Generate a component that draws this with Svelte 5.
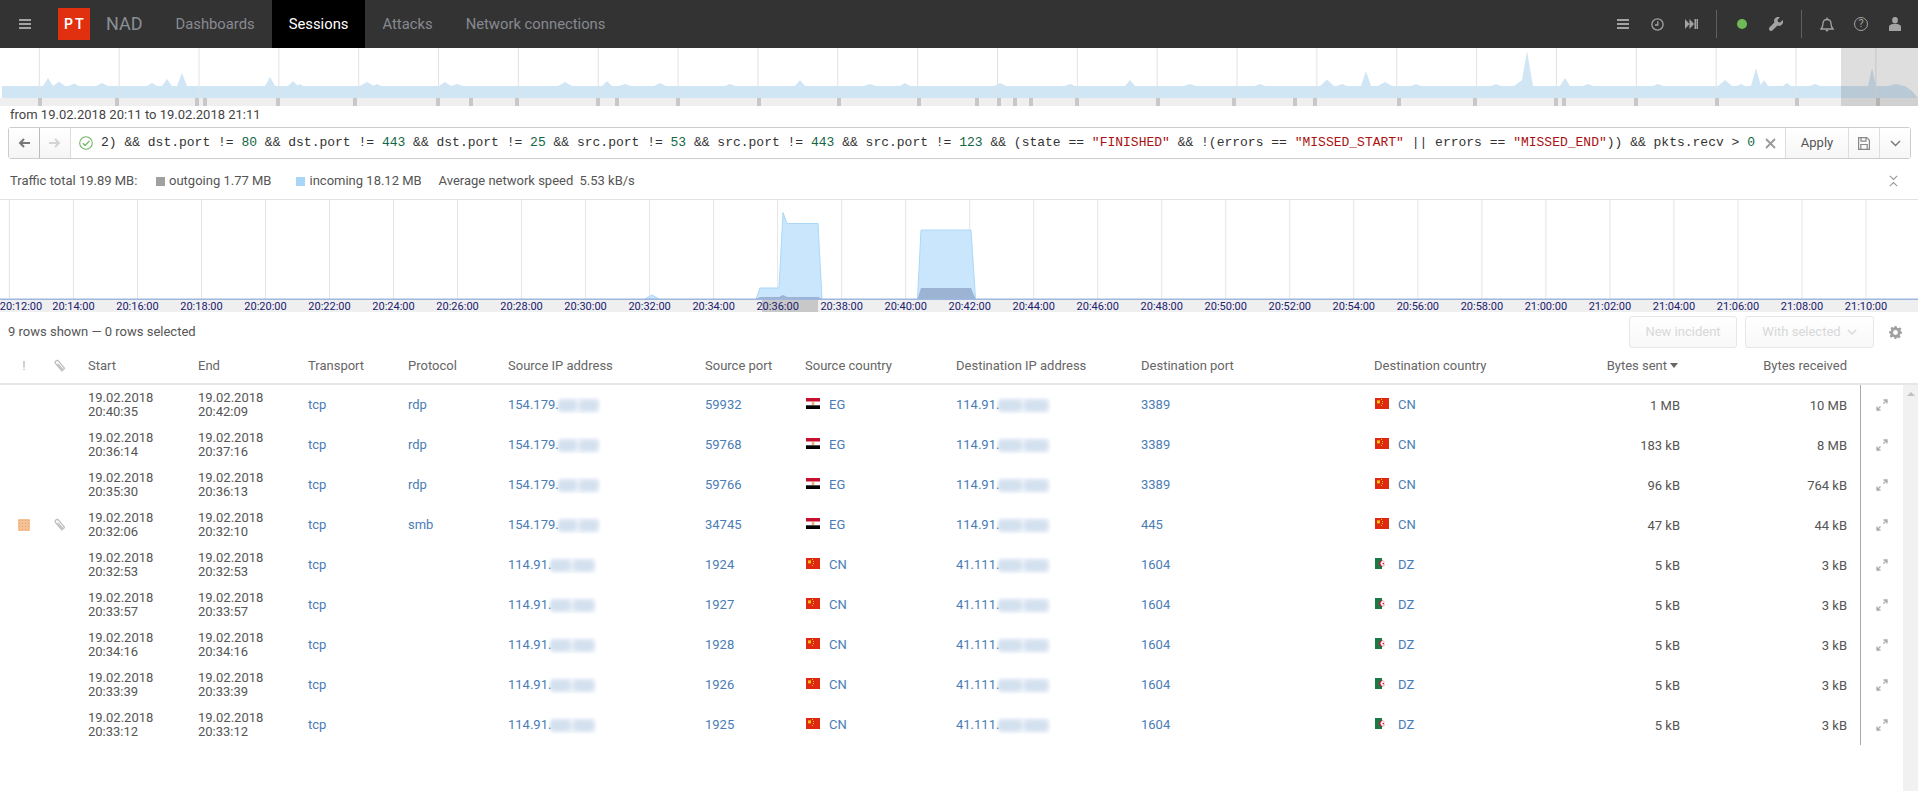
<script>
  const navItems = [
    { label: 'Dashboards', active: false },
    { label: 'Sessions', active: true },
    { label: 'Attacks', active: false },
    { label: 'Network connections', active: false }
  ];

  const bumps = [
    [48,78,5],[59,81.5,6],[74,83.5,5],[102,83,6],[152,83,5],[167,79,5],[182,73,5],[270,77,5],[293,81,5],[300,84,3],
    [367,82,7],[377,84,4],[445,82,6],[457,84,6],[565,82,7],[607,81,5],[625,84,6],
    [660,83,6],[730,84,5],[800,80,5],[870,84,6],[905,83,5],[1000,83,6],[1070,84,5],[1130,80,5],[1190,84,6],[1260,84,5],
    [1327,79.5,7],[1342,84,5],[1366,71,5],[1385,82,7],[1416,84,5],[1496,84,5],[1522,80,8],[1527,51,6],[1565,78,5],[1588,84,5],
    [1658,84,5],[1725,80,7],[1741,84,4],[1756,68,5],[1764,80,4],[1787,83,4],[1815,84,5],[1872,68,4],[1896,84,8]
  ];
  let miniPoints = [[2, 50], [2, 38]];
  for (const [x, y, w] of bumps) {
    miniPoints.push([x - w, 38], [x, y - 48], [x + w, 38]);
  }
  miniPoints.push([1905, 38], [1912, 43], [1918, 50]);
  const miniArea = miniPoints.map((p) => p.join(',')).join(' ') + ' 1918,50';

  const miniGrid = Array.from({ length: 24 }, (_, i) => 39.3 + 79.85 * i);
  const miniTicks = [38,115,195,203,276,353,436,469,515,596,615,676,757,837,917,975,997,1013,1029,1075,1156,1232,1293,1313,1397,1473,1554,1562,1634,1715,1795,1876];

  const times = Array.from({ length: 30 }, (_, i) => {
    const total = 20 * 60 + 12 + i * 2;
    const h = Math.floor(total / 60);
    const m = String(total % 60).padStart(2, '0');
    return { x: 9.4 + 64.02 * i, label: `${h}:${m}:00` };
  });

  const S1 = '154.179.', D1 = '114.91.', D2 = '41.111.';
  const rows = [
    ['20:40:35','20:42:09','rdp',S1,'59932','EG',D1,'3389','CN','1 MB','10 MB',false],
    ['20:36:14','20:37:16','rdp',S1,'59768','EG',D1,'3389','CN','183 kB','8 MB',false],
    ['20:35:30','20:36:13','rdp',S1,'59766','EG',D1,'3389','CN','96 kB','764 kB',false],
    ['20:32:06','20:32:10','smb',S1,'34745','EG',D1,'445','CN','47 kB','44 kB',true],
    ['20:32:53','20:32:53','',D1,'1924','CN',D2,'1604','DZ','5 kB','3 kB',false],
    ['20:33:57','20:33:57','',D1,'1927','CN',D2,'1604','DZ','5 kB','3 kB',false],
    ['20:34:16','20:34:16','',D1,'1928','CN',D2,'1604','DZ','5 kB','3 kB',false],
    ['20:33:39','20:33:39','',D1,'1926','CN',D2,'1604','DZ','5 kB','3 kB',false],
    ['20:33:12','20:33:12','',D1,'1925','CN',D2,'1604','DZ','5 kB','3 kB',false]
  ];
</script>

{#snippet clip()}
  <svg class="clip" width="12" height="14" viewBox="0 0 12 14" fill="none" stroke="#bdbdbd" stroke-width="1.3">
    <path d="M9.500 12.500 L2.600 4.600 A1.900 1.900 0 0 1 5.600 2.200 L11 8.600 A1.100 1.100 0 0 1 9.300 10 L4.600 4.600" />
  </svg>
{/snippet}

{#snippet flag(code)}
  <svg class="flag" width="14" height="11" viewBox="0 0 14 11">
    {#if code === 'EG'}
      <rect width="14" height="3.700" fill="#c8102e" />
      <rect y="3.700" width="14" height="3.600" fill="#fff" />
      <rect y="7.300" width="14" height="3.700" fill="#000" />
      <rect x="5.800" y="4" width="2.400" height="3" fill="#e8b06a" />
    {:else if code === 'CN'}
      <rect width="14" height="11" fill="#de2910" />
      <rect x="2" y="2.400" width="3" height="3" fill="#f5c518" />
      <rect x="6" y="1" width="1" height="1" fill="#f5c518" />
      <rect x="7" y="3" width="1" height="1" fill="#f5c518" />
      <rect x="7" y="5" width="1" height="1" fill="#f5c518" />
      <rect x="6" y="7" width="1" height="1" fill="#f5c518" />
    {:else}
      <rect width="7" height="11" fill="#1a7a45" />
      <rect x="7" width="7" height="11" fill="#fff" />
      <circle cx="7" cy="5.500" r="3" fill="#d21034" />
      <circle cx="7.900" cy="5.500" r="2.400" fill="#fff" />
      <rect x="7.600" y="4.800" width="1.600" height="1.500" fill="#d21034" />
    {/if}
  </svg>
{/snippet}

{#snippet masked(prefix, a, b)}
  <span class="ip"><span class="mask" aria-hidden="true"><i class="blob" style={`width:${a}px`}></i><i class="blob" style={`width:${b}px`}></i></span><span class="ip-text">{prefix}</span></span>
{/snippet}

<div class="page">
  <header class="topbar">
    <svg class="burger" width="12" height="10" viewBox="0 0 12 10" fill="#a3a3a3">
      <rect width="12" height="2" /><rect y="4" width="12" height="2" /><rect y="8" width="12" height="2" />
    </svg>
    <div class="logo">PT</div>
    <div class="brand">NAD</div>
    <nav class="nav">
      {#each navItems as item}
        <span class="tab" class:active={item.active}>{item.label}</span>
      {/each}
    </nav>
    <div class="tools">
      <span class="slot"><svg width="12" height="10" viewBox="0 0 12 10" fill="#a3a3a3"><rect width="12" height="2" /><rect y="4" width="12" height="2" /><rect y="8" width="12" height="2" /></svg></span>
      <span class="slot"><svg width="13" height="13" viewBox="0 0 13 13" fill="none" stroke="#a3a3a3" stroke-width="1.300"><circle cx="6.500" cy="6.500" r="5.600" /><path d="M6.800 3.200V7H4" /></svg></span>
      <span class="slot"><svg width="13" height="10" viewBox="0 0 13 10" fill="#a3a3a3"><path d="M0 0l4.500 5L0 10zM4.500 0L9 5l-4.500 5zM9.500 0H11v10H9.500z" /><rect x="11.500" width="1.500" height="10" /></svg></span>
      <span class="sep"></span>
      <span class="slot"><span class="dot"></span></span>
      <span class="slot"><svg width="14" height="14" viewBox="0 0 14 14" fill="#a3a3a3"><path d="M13.600 3.100L11.200 5.500 9 5 8.500 2.800 10.900.4A4 4 0 0 0 5.400 5.500L.6 10.300a2 2 0 0 0 3 3L8.500 8.600A4 4 0 0 0 13.600 3.100z" /></svg></span>
      <span class="sep"></span>
      <span class="slot"><svg width="14" height="15" viewBox="0 0 14 15" fill="none" stroke="#a3a3a3" stroke-width="1.300"><path d="M1 12h12c-1.500-1.500-2-3-2-5.500C11 4 9.300 2.500 7 2.500S3 4 3 6.500C3 9 2.500 10.500 1 12z" /><path d="M7 .5v2" /><path d="M5.800 13.500h2.400" stroke-width="1.600" /></svg></span>
      <span class="slot"><span class="help">?</span></span>
      <span class="slot"><svg width="12" height="14" viewBox="0 0 12 14" fill="#a3a3a3"><rect x="3.200" width="5.600" height="6.400" rx="2.600" /><path d="M0 14V9.500C0 8.300 1.500 7.600 3.500 7h5c2 .6 3.500 1.300 3.500 2.500V14z" /></svg></span>
    </div>
  </header>

  <svg class="mini" width="1918" height="58" viewBox="0 0 1918 58">
    <rect y="50" width="1918" height="8" fill="#efefef" />
    <polygon points={miniArea} fill="#d0e6f5" />
    {#each miniGrid as x}
      <line x1={x} x2={x} y1="0" y2="50" stroke="#e2e2e2" />
    {/each}
    {#each miniTicks as x}
      <rect x={x} y="50" width="4" height="8" fill="#c8c8c8" />
    {/each}
    <rect x="1841" width="77" height="58" fill="#6b6b6b" opacity="0.22" />
  </svg>

  <div class="range">from 19.02.2018 20:11 to 19.02.2018 21:11</div>

  <div class="search">
    <button class="hist back" aria-label="Back">
      <svg width="12" height="10" viewBox="0 0 12 10" fill="none" stroke="#777" stroke-width="2"><path d="M12 5H2M6 1L2 5l4 4" /></svg>
    </button>
    <button class="hist" aria-label="Forward">
      <svg width="12" height="10" viewBox="0 0 12 10" fill="none" stroke="#d4d4d4" stroke-width="2"><path d="M0 5h10M6 1l4 4-4 4" /></svg>
    </button>
    <div class="query">
      <svg class="ok" width="14" height="14" viewBox="0 0 14 14" fill="none" stroke="#72b465" stroke-width="1.100"><circle cx="7" cy="7" r="6.300" /><path d="M3.800 7.200l2.300 2.300 4.300-4.600" stroke-width="1.300" /></svg>
      <code>2) &amp;&amp; dst.port != <b>80</b> &amp;&amp; dst.port != <b>443</b> &amp;&amp; dst.port != <b>25</b> &amp;&amp; src.port != <b>53</b> &amp;&amp; src.port != <b>443</b> &amp;&amp; src.port != <b>123</b> &amp;&amp; (state == <em>"FINISHED"</em> &amp;&amp; !(errors == <em>"MISSED_START"</em> || errors == <em>"MISSED_END"</em>)) &amp;&amp; pkts.recv &gt; <b>0</b></code>
      <svg class="clear" width="11" height="11" viewBox="0 0 11 11" stroke="#999" stroke-width="1.800"><path d="M1 1l9 9M10 1l-9 9" /></svg>
    </div>
    <button class="act apply">Apply</button>
    <button class="act icon" aria-label="Save">
      <svg width="12" height="13" viewBox="0 0 12 13" fill="none" stroke="#888" stroke-width="1.200"><path d="M.6.6h8.200l2.600 2.600v9.200H.6z" /><path d="M3 .8v3.400h5V.8M2.800 12V7.500h6.400V12" /></svg>
    </button>
    <button class="act icon" aria-label="More">
      <svg width="11" height="7" viewBox="0 0 11 7" fill="none" stroke="#777" stroke-width="1.400"><path d="M1 1l4.500 4.500L10 1" /></svg>
    </button>
  </div>

  <div class="traffic">
    <span class="t-total">Traffic total 19.89 MB:</span>
    <span class="swatch out"></span><span class="t-out">outgoing 1.77 MB</span>
    <span class="swatch inc"></span><span class="t-in">incoming 18.12 MB</span>
    <span class="t-avg">Average network speed <span class="t-val">5.53 kB/s</span></span>
    <svg class="collapse" width="9" height="12" viewBox="0 0 9 12" fill="none" stroke="#999" stroke-width="1.100"><path d="M.8.800L4.500 4.500 8.200.8M.8 11.200L4.500 7.500l3.700 3.700" /></svg>
  </div>

  <svg class="chart" width="1918" height="112" viewBox="0 1 1918 112">
    <rect y="101" width="1918" height="12" fill="#efefef" />
    <rect x="762" y="101" width="56" height="12" fill="#c8c8c8" />
    {#each times as t}
      <line x1={t.x} x2={t.x} y1="0" y2="100" stroke="#e4e4e4" />
    {/each}
    <polygon points="645,100 652,96 659,100" fill="#c9e6fd" stroke="#a9d8f8" />
    <polygon points="756,100 760,89 779,89 783,13.500 787,24.500 818,24.500 822,100" fill="#c9e6fd" stroke="#a9d8f8" />
    <polygon points="917.500,100 921,31 971,31 975.500,100" fill="#c9e6fd" stroke="#a9d8f8" />
    <polygon points="917.500,100 921,89 971,89 975.500,100" fill="#9db3d3" />
    <polygon points="756,100 760,98 779,98 783,96 787,98 818,98 822,100" fill="#9db3d3" />
    <rect y="99.500" width="1918" height="1.500" fill="#9db8de" />
    {#each times as t, i}
      <text class="tlabel" x={i === 0 ? 21 : t.x} y="110.500" text-anchor="middle">{t.label}</text>
    {/each}
  </svg>

  <div class="toolbar">
    <span class="count">9 rows shown — 0 rows selected</span>
    <button class="ghost new" disabled>New incident</button>
    <button class="ghost with" disabled>With selected
      <svg width="10" height="6" viewBox="0 0 10 6" fill="none" stroke="#d8d8d8" stroke-width="1.300"><path d="M.8.800L5 5 9.200.8" /></svg>
    </button>
    <svg class="gear" width="13" height="13" viewBox="0 0 24 24" fill="#a0a0a0"><path fill-rule="evenodd" d="M10 0h4l.7 3.300 2.500 1 2.800-1.800 2.800 2.800-1.800 2.800 1 2.500L24 10v4l-3.300.7-1 2.500 1.800 2.800-2.800 2.800-2.800-1.800-2.500 1L14 24h-4l-.7-3.300-2.500-1L4 21.500 1.200 18.700 3 15.900l-1-2.500L0 14v-4l3.300-.7 1-2.500L2.500 4 5.300 1.200 8 3l2.500-1zM12 7.500a4.500 4.500 0 1 0 0 9 4.500 4.500 0 0 0 0-9z" /></svg>
  </div>

  <div class="thead grid">
    <span class="center bang">!</span>
    <span class="clipcell">{@render clip()}</span>
    <span>Start</span><span>End</span><span>Transport</span><span>Protocol</span>
    <span>Source IP address</span><span>Source port</span><span>Source country</span>
    <span>Destination IP address</span><span>Destination port</span><span>Destination country</span>
    <span class="num sent-head">Bytes sent<i class="caret"></i></span>
    <span class="num">Bytes received</span>
    <span></span>
  </div>

  <div class="tbody">
    <div class="rows">
      {#each rows as r}
        <div class="row grid">
          <span class="center">{#if r[11]}<i class="sev"></i>{/if}</span>
          <span class="clipcell">{#if r[11]}{@render clip()}{/if}</span>
          <span class="when">19.02.2018<br />{r[0]}</span>
          <span class="when">19.02.2018<br />{r[1]}</span>
          <span class="link">tcp</span>
          <span class="link">{r[2]}</span>
          <span class="link">{@render masked(r[3], r[3] === S1 ? 19 : 21, r[3] === S1 ? 19 : 21)}</span>
          <span class="link">{r[4]}</span>
          <span class="link country">{@render flag(r[5])}{r[5]}</span>
          <span class="link">{@render masked(r[6], 24, 24)}</span>
          <span class="link">{r[7]}</span>
          <span class="link country">{@render flag(r[8])}{r[8]}</span>
          <span class="num value sent">{r[9]}</span>
          <span class="num value">{r[10]}</span>
          <span class="expand">
            <svg width="12" height="12" viewBox="0 0 12 12" fill="none" stroke="#aaa" stroke-width="1.300"><path d="M1 11L4.500 7.500M7.500 4.500L11 1M7.500 1H11v3.500M1 7.500V11h3.500" /></svg>
          </span>
        </div>
      {/each}
    </div>
    <div class="scroll"><i class="up"></i></div>
  </div>
</div>

<style>
  :global(body) { margin: 0; background: #fff; }
  .page {
    width: 1918px; height: 791px; overflow: hidden;
    font: 13px/14px Roboto, "Liberation Sans", sans-serif; color: #555;
    display: flex; flex-direction: column;
  }
  .topbar { height: 48px; background: #333; display: flex; align-items: center; flex: none; padding-left: 19px; }
  .burger { flex: none; }
  .logo {
    width: 32px; height: 32px; margin-left: 27px; background: #e0300f; color: #fff; box-sizing: border-box; padding-left: 1.500px;
    font: 600 14px/32px Inter, sans-serif; letter-spacing: 1.500px; text-align: center;
  }
  .brand { margin: 0 16px; font-size: 18px; color: #8a8f96; width: 36px; line-height: 48px; }
  .nav { display: flex; height: 48px; }
  .tab { padding: 0 17.5px; font-size: 14.800px; line-height: 48px; color: #878a90; }
  .tab.active { background: #000; color: #fff; padding: 0 16.500px; }
  .tab.active + .tab { padding-right: 15.500px; }
  .tools { margin-left: auto; padding-right: 6px; display: flex; align-items: center; }
  .slot { width: 34px; display: flex; justify-content: center; align-items: center; }
  .sep { width: 1px; height: 28px; background: #5f5f5f; margin: 0 8px; }
  .dot { width: 10px; height: 10px; border-radius: 50%; background: #6ebb55; }
  .help {
    width: 12px; height: 12px; border: 1.300px solid #a3a3a3; border-radius: 50%;
    color: #a3a3a3; font-size: 11px; line-height: 12px; text-align: center;
  }
  .mini, .chart { display: block; flex: none; }
  .range { height: 21px; line-height: 18px; padding-left: 10px; color: #444; flex: none; }
  .search {
    height: 32px; box-sizing: border-box; margin: 0 7px 0 8px; flex: none;
    display: flex; border: 1px solid #ccc; border-radius: 3px;
  }
  button { font: inherit; margin: 0; padding: 0; background: #fff; border: 0; color: inherit; display: flex; align-items: center; justify-content: center; }
  .hist { width: 31px; border-right: 1px solid #ddd; background: linear-gradient(#fff, #f5f5f5); }
  .hist.back { border-right-color: #bbb; }
  .query { flex: 1; display: flex; align-items: center; min-width: 0; padding-left: 8px; }
  .ok { flex: none; margin-right: 8px; }
  code { font: 13px/18px "Liberation Mono", monospace; color: #333; white-space: pre; flex: 1; overflow: hidden; }
  code b { font-weight: 400; color: #164; }
  code em { font-style: normal; color: #a11; }
  .clear { flex: none; margin: 0 9px; }
  .act { border-left: 1px solid #ddd; background: linear-gradient(#fff, #f6f6f6); flex: none; }
  .apply { width: 63px; color: #555; }
  .icon { width: 31px; }
  .traffic {
    height: 41px; flex: none; box-sizing: border-box; border-bottom: 1px solid #e2e2e2;
    display: flex; align-items: center; padding: 4px 0 0 10px; color: #555;
  }
  .t-total { width: 145.500px; }
  .swatch { width: 9px; height: 9px; margin-right: 4.500px; }
  .swatch.out { background: #a0a0a0; }
  .swatch.inc { background: #a8d6f7; }
  .t-out { width: 127px; }
  .t-in { width: 129px; }
  .t-val { margin-left: 3px; }
  .collapse { margin-left: auto; margin-right: 20px; }
  .tlabel { font: 11px Roboto, sans-serif; fill: #20206e; }
  .toolbar { height: 40px; flex: none; display: flex; align-items: center; padding: 0 16px 0 8px; color: #555; }
  .count { margin-right: auto; }
  .ghost {
    height: 32px; box-sizing: border-box; border: 1px solid #e6e6e6; border-radius: 3px;
    color: #d8d8d8; background: linear-gradient(#fff, #f8f8f8); gap: 6px;
  }
  .new { width: 108px; margin-right: 8px; }
  .with { width: 129px; }
  .gear { margin-left: 15px; }
  .grid {
    display: grid;
    grid-template-columns: 48px 40px 110px 110px 100px 100px 197px 100px 151px 185px 233px 156px 160px 170px 43px;
    align-items: center;
  }
  .thead { height: 33px; flex: none; box-sizing: border-box; border-bottom: 2px solid #e6e6e6; color: #666; padding-bottom: 3px; }
  .center { display: flex; justify-content: center; }
  .clipcell { padding-left: 5px; }
  .bang { color: #b5b5b5; }
  .clip { display: block; }
  .num { text-align: right; padding-right: 13px; }
  .num.sent { padding-right: 10px; }
  .num.sent-head { padding-right: 12px; }
  .caret {
    display: inline-block; border: 4px solid transparent; border-top: 5px solid #666; border-bottom: 0;
    margin-left: 3px; vertical-align: 2px;
  }
  .tbody { flex: 1; display: flex; min-height: 0; }
  .rows { flex: 1; }
  .row { height: 40px; }
  .when { color: #555; }
  .link { color: #4a7db5; }
  .ip { display: inline-flex; flex-direction: row-reverse; align-items: center; }
  .ip-text { position: relative; z-index: 1; }
  .mask { display: inline-flex; gap: 2px; height: 15px; align-items: center; padding-right: 2px; margin-left: -1px; background: #eef3f9; border-radius: 4px; filter: blur(1px); }
  .blob { height: 11px; background: #d3e0ee; border-radius: 5px; filter: blur(1.500px); }
  .country { display: flex; align-items: center; }
  .flag { margin: 0 9px 3px 1px; flex: none; }
  .value { color: #555; padding-top: 1px; }
  .expand { height: 40px; border-left: 1px solid #aaa; display: flex; align-items: center; justify-content: center; box-sizing: border-box; }
  .scroll { width: 15px; background: #f1f1f1; flex: none; position: relative; }
  .up {
    position: absolute; left: 4px; top: 7px;
    border: 4px solid transparent; border-bottom: 4px solid #c0c0c0; border-top: 0;
  }
  .sev {
    width: 12px; height: 12px; border-radius: 1px; display: block; background-color: #f4c094;
    background-image: radial-gradient(#e6a777 .7px, transparent .8px); background-size: 3px 3px;
  }
</style>
